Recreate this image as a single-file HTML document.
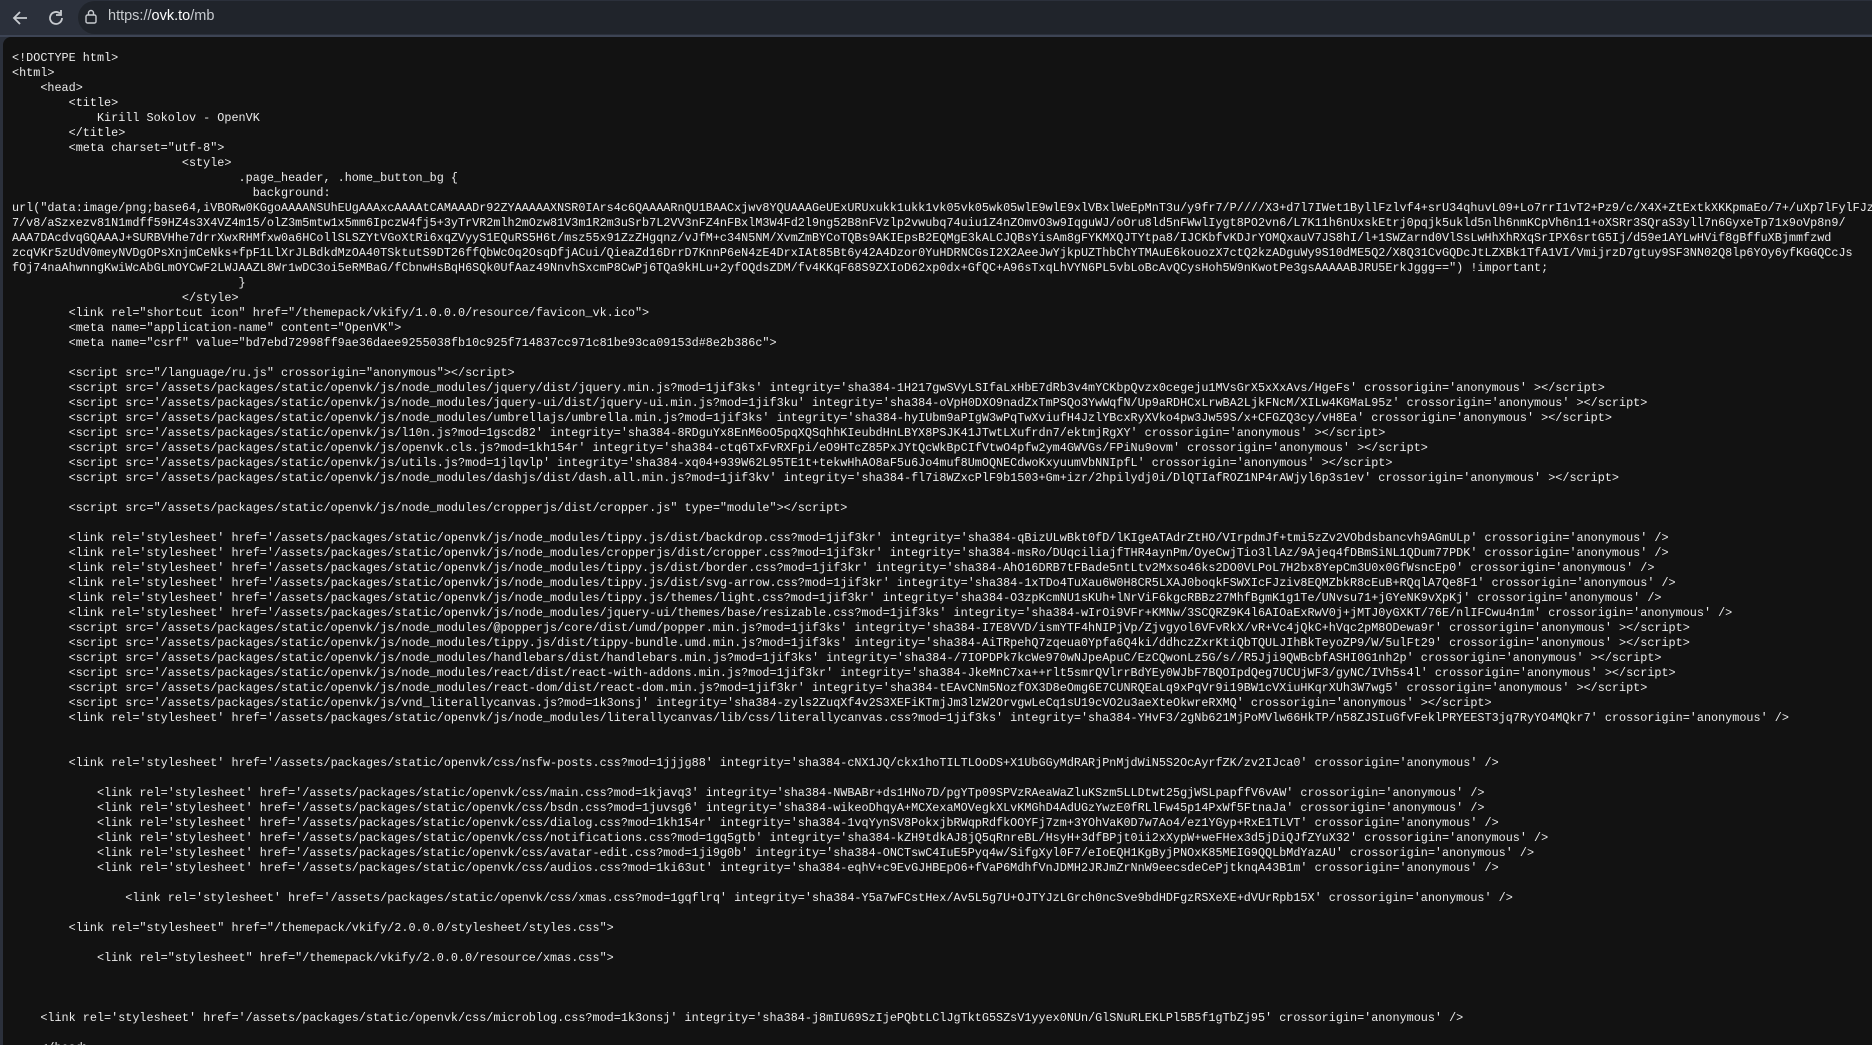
<!DOCTYPE html>
<html><head><meta charset="utf-8"><style>
html,body{margin:0;padding:0;width:1872px;height:1045px;overflow:hidden;background:#2b303b;}
.bar{position:absolute;left:0;top:0;width:1872px;height:37px;background:#2b303b;}
.pill{position:absolute;left:78px;top:1px;right:-20px;height:33px;background:#20242b;border-radius:17px 0 0 17px;}
.url{position:absolute;left:108px;top:8px;font:14.5px "Liberation Sans",sans-serif;color:#c8cbd0;}
.url b{font-weight:normal;color:#fff}
.line{position:absolute;left:0;top:35px;width:1872px;height:2px;background:#3d4454;}
.main{position:absolute;left:3px;top:37px;width:1869px;height:1008px;background:#121212;border-radius:8px 0 0 0;overflow:hidden;}
pre{margin:0;padding:14px 0 0 9px;font:11.8px/15px "Liberation Mono",monospace;color:#ececec;white-space:pre;}
</style></head><body>
<div class="bar">
<svg style="position:absolute;left:10px;top:8px" width="20" height="20" viewBox="0 0 20 20"><path d="M17 10H4M10 4L4 10L10 16" stroke="#c8cbd0" stroke-width="1.8" fill="none"/></svg>
<svg style="position:absolute;left:46px;top:8px" width="20" height="20" viewBox="0 0 20 20"><path d="M16 10a6 6 0 1 1-2-4.5" stroke="#c8cbd0" stroke-width="1.8" fill="none"/><path d="M15 2v5h-5" stroke="#c8cbd0" stroke-width="1.8" fill="none"/></svg>
<div class="pill"></div>
<svg style="position:absolute;left:84px;top:9px" width="14" height="16" viewBox="0 0 14 16"><rect x="2" y="6" width="10" height="8" rx="1.5" stroke="#c8cbd0" stroke-width="1.4" fill="none"/><path d="M4.5 6V4a2.5 2.5 0 0 1 5 0v2" stroke="#c8cbd0" stroke-width="1.4" fill="none"/></svg>
<div class="url">https://<b>ovk.to</b>/mb</div>
<div class="line"></div>
</div>
<div class="main"><pre>&lt;!DOCTYPE html&gt;
&lt;html&gt;
    &lt;head&gt;
        &lt;title&gt;
            Kirill Sokolov - OpenVK
        &lt;/title&gt;
        &lt;meta charset="utf-8"&gt;
                        &lt;style&gt;
                                .page_header, .home_button_bg {
                                  background:
url("data:image/png;base64,iVBORw0KGgoAAAANSUhEUgAAAxcAAAAtCAMAAADr92ZYAAAAAXNSR0IArs4c6QAAAARnQU1BAACxjwv8YQUAAAGeUExURUxukk1ukk1vk05vk05wk05wlE9wlE9xlVBxlWeEpMnT3u/y9fr7/P////X3+d7l7IWet1ByllFzlvf4+srU34qhuvL09+Lo7rrI1vT2+Pz9/c/X4X+ZtExtkXKKpmaEo/7+/uXp7lFylFJzl
7/v8/aSzxezv81N1mdff59HZ4s3X4VZ4m15/olZ3m5mtw1x5mm6IpczW4fj5+3yTrVR2mlh2mOzw81V3m1R2m3uSrb7L2VV3nFZ4nFBxlM3W4Fd2l9ng52B8nFVzlp2vwubq74uiu1Z4nZOmvO3w9IqguWJ/oOru8ld5nFWwlIygt8PO2vn6/L7K11h6nUxskEtrj0pqjk5ukld5nlh6nmKCpVh6n11+oXSRr3SQraS3yll7n6GyxeTp71x9oVp8n9/
AAA7DAcdvqGQAAAJ+SURBVHhe7drrXwxRHMfxw0a6HCollSLSZYtVGoXtRi6xqZVyyS1EQuRS5H6t/msz55x91ZzZHgqnz/vJfM+c34N5NM/XvmZmBYCoTQBs9AKIEpsB2EQMgE3kALCJQBsYisAm8gFYKMXQJTYtpa8/IJCKbfvKDJrYOMQxauV7JS8hI/l+1SWZarnd0VlSsLwHhXhRXqSrIPX6srtG5Ij/d59e1AYLwHVif8gBffuXBjmmfzwd
zcqVKr5zUdV0meyNVDgOPsXnjmCeNks+fpF1LlXrJLBdkdMzOA40TSktutS9DT26ffQbWcOq2OsqDfjACui/QieaZd16DrrD7KnnP6eN4zE4DrxIAt85Bt6y42A4Dzor0YuHDRNCGsI2X2AeeJwYjkpUZThbChYTMAuE6kouozX7ctQ2kzADguWy9S10dME5Q2/X8Q31CvGQDcJtLZXBk1TfA1VI/VmijrzD7gtuy9SF3NN02Q8lp6YOy6yfKGGQCcJs
fOj74naAhwnngKwiWcAbGLmOYCwF2LWJAAZL8Wr1wDC3oi5eRMBaG/fCbnwHsBqH6SQk0UfAaz49NnvhSxcmP8CwPj6TQa9kHLu+2yfOQdsZDM/fv4KKqF68S9ZXIoD62xp0dx+GfQC+A96sTxqLhVYN6PL5vbLoBcAvQCysHoh5W9nKwotPe3gsAAAAABJRU5ErkJggg==") !important;
                                }
                        &lt;/style&gt;
        &lt;link rel="shortcut icon" href="/themepack/vkify/1.0.0.0/resource/favicon_vk.ico"&gt;
        &lt;meta name="application-name" content="OpenVK"&gt;
        &lt;meta name="csrf" value="bd7ebd72998ff9ae36daee9255038fb10c925f714837cc971c81be93ca09153d#8e2b386c"&gt;

        &lt;script src="/language/ru.js" crossorigin="anonymous"&gt;&lt;/script&gt;
        &lt;script src='/assets/packages/static/openvk/js/node_modules/jquery/dist/jquery.min.js?mod=1jif3ks' integrity='sha384-1H217gwSVyLSIfaLxHbE7dRb3v4mYCKbpQvzx0cegeju1MVsGrX5xXxAvs/HgeFs' crossorigin='anonymous' &gt;&lt;/script&gt;
        &lt;script src='/assets/packages/static/openvk/js/node_modules/jquery-ui/dist/jquery-ui.min.js?mod=1jif3ku' integrity='sha384-oVpH0DXO9nadZxTmPSQo3YwWqfN/Up9aRDHCxLrwBA2LjkFNcM/XILw4KGMaL95z' crossorigin='anonymous' &gt;&lt;/script&gt;
        &lt;script src='/assets/packages/static/openvk/js/node_modules/umbrellajs/umbrella.min.js?mod=1jif3ks' integrity='sha384-hyIUbm9aPIgW3wPqTwXviufH4JzlYBcxRyXVko4pw3Jw59S/x+CFGZQ3cy/vH8Ea' crossorigin='anonymous' &gt;&lt;/script&gt;
        &lt;script src='/assets/packages/static/openvk/js/l10n.js?mod=1gscd82' integrity='sha384-8RDguYx8EnM6oO5pqXQSqhhKIeubdHnLBYX8PSJK41JTwtLXufrdn7/ektmjRgXY' crossorigin='anonymous' &gt;&lt;/script&gt;
        &lt;script src='/assets/packages/static/openvk/js/openvk.cls.js?mod=1kh154r' integrity='sha384-ctq6TxFvRXFpi/eO9HTcZ85PxJYtQcWkBpCIfVtwO4pfw2ym4GWVGs/FPiNu9ovm' crossorigin='anonymous' &gt;&lt;/script&gt;
        &lt;script src='/assets/packages/static/openvk/js/utils.js?mod=1jlqvlp' integrity='sha384-xq04+939W62L95TE1t+tekwHhAO8aF5u6Jo4muf8UmOQNECdwoKxyuumVbNNIpfL' crossorigin='anonymous' &gt;&lt;/script&gt;
        &lt;script src='/assets/packages/static/openvk/js/node_modules/dashjs/dist/dash.all.min.js?mod=1jif3kv' integrity='sha384-fl7i8WZxcPlF9b1503+Gm+izr/2hpilydj0i/DlQTIafROZ1NP4rAWjyl6p3s1ev' crossorigin='anonymous' &gt;&lt;/script&gt;

        &lt;script src="/assets/packages/static/openvk/js/node_modules/cropperjs/dist/cropper.js" type="module"&gt;&lt;/script&gt;

        &lt;link rel='stylesheet' href='/assets/packages/static/openvk/js/node_modules/tippy.js/dist/backdrop.css?mod=1jif3kr' integrity='sha384-qBizULwBkt0fD/lKIgeATAdrZtHO/VIrpdmJf+tmi5zZv2VObdsbancvh9AGmULp' crossorigin='anonymous' /&gt;
        &lt;link rel='stylesheet' href='/assets/packages/static/openvk/js/node_modules/cropperjs/dist/cropper.css?mod=1jif3kr' integrity='sha384-msRo/DUqciliajfTHR4aynPm/OyeCwjTio3llAz/9Ajeq4fDBmSiNL1QDum77PDK' crossorigin='anonymous' /&gt;
        &lt;link rel='stylesheet' href='/assets/packages/static/openvk/js/node_modules/tippy.js/dist/border.css?mod=1jif3kr' integrity='sha384-AhO16DRB7tFBade5ntLtv2Mxso46ks2DO0VLPoL7H2bx8YepCm3U0x0GfWsncEp0' crossorigin='anonymous' /&gt;
        &lt;link rel='stylesheet' href='/assets/packages/static/openvk/js/node_modules/tippy.js/dist/svg-arrow.css?mod=1jif3kr' integrity='sha384-1xTDo4TuXau6W0H8CR5LXAJ0boqkFSWXIcFJziv8EQMZbkR8cEuB+RQqlA7Qe8F1' crossorigin='anonymous' /&gt;
        &lt;link rel='stylesheet' href='/assets/packages/static/openvk/js/node_modules/tippy.js/themes/light.css?mod=1jif3kr' integrity='sha384-O3zpKcmNU1sKUh+lNrViF6kgcRBBz27MhfBgmK1g1Te/UNvsu71+jGYeNK9vXpKj' crossorigin='anonymous' /&gt;
        &lt;link rel='stylesheet' href='/assets/packages/static/openvk/js/node_modules/jquery-ui/themes/base/resizable.css?mod=1jif3ks' integrity='sha384-wIrOi9VFr+KMNw/3SCQRZ9K4l6AIOaExRwV0j+jMTJ0yGXKT/76E/nlIFCwu4n1m' crossorigin='anonymous' /&gt;
        &lt;script src='/assets/packages/static/openvk/js/node_modules/@popperjs/core/dist/umd/popper.min.js?mod=1jif3ks' integrity='sha384-I7E8VVD/ismYTF4hNIPjVp/Zjvgyol6VFvRkX/vR+Vc4jQkC+hVqc2pM8ODewa9r' crossorigin='anonymous' &gt;&lt;/script&gt;
        &lt;script src='/assets/packages/static/openvk/js/node_modules/tippy.js/dist/tippy-bundle.umd.min.js?mod=1jif3ks' integrity='sha384-AiTRpehQ7zqeua0Ypfa6Q4ki/ddhczZxrKtiQbTQULJIhBkTeyoZP9/W/5ulFt29' crossorigin='anonymous' &gt;&lt;/script&gt;
        &lt;script src='/assets/packages/static/openvk/js/node_modules/handlebars/dist/handlebars.min.js?mod=1jif3ks' integrity='sha384-/7IOPDPk7kcWe970wNJpeApuC/EzCQwonLz5G/s//R5Jji9QWBcbfASHI0G1nh2p' crossorigin='anonymous' &gt;&lt;/script&gt;
        &lt;script src='/assets/packages/static/openvk/js/node_modules/react/dist/react-with-addons.min.js?mod=1jif3kr' integrity='sha384-JkeMnC7xa++rlt5smrQVlrrBdYEy0WJbF7BQOIpdQeg7UCUjWF3/gyNC/IVh5s4l' crossorigin='anonymous' &gt;&lt;/script&gt;
        &lt;script src='/assets/packages/static/openvk/js/node_modules/react-dom/dist/react-dom.min.js?mod=1jif3kr' integrity='sha384-tEAvCNm5NozfOX3D8eOmg6E7CUNRQEaLq9xPqVr9i19BW1cVXiuHKqrXUh3W7wg5' crossorigin='anonymous' &gt;&lt;/script&gt;
        &lt;script src='/assets/packages/static/openvk/js/vnd_literallycanvas.js?mod=1k3onsj' integrity='sha384-zyls2ZuqXf4v2S3XEFiKTmjJm3lzW2OrvgwLeCq1sU19cVO2u3aeXteOkwreRXMQ' crossorigin='anonymous' &gt;&lt;/script&gt;
        &lt;link rel='stylesheet' href='/assets/packages/static/openvk/js/node_modules/literallycanvas/lib/css/literallycanvas.css?mod=1jif3ks' integrity='sha384-YHvF3/2gNb621MjPoMVlw66HkTP/n58ZJSIuGfvFeklPRYEEST3jq7RyYO4MQkr7' crossorigin='anonymous' /&gt;


        &lt;link rel='stylesheet' href='/assets/packages/static/openvk/css/nsfw-posts.css?mod=1jjjg88' integrity='sha384-cNX1JQ/ckx1hoTILTLOoDS+X1UbGGyMdRARjPnMjdWiN5S2OcAyrfZK/zv2IJca0' crossorigin='anonymous' /&gt;

            &lt;link rel='stylesheet' href='/assets/packages/static/openvk/css/main.css?mod=1kjavq3' integrity='sha384-NWBABr+ds1HNo7D/pgYTp09SPVzRAeaWaZluKSzm5LLDtwt25gjWSLpapffV6vAW' crossorigin='anonymous' /&gt;
            &lt;link rel='stylesheet' href='/assets/packages/static/openvk/css/bsdn.css?mod=1juvsg6' integrity='sha384-wikeoDhqyA+MCXexaMOVegkXLvKMGhD4AdUGzYwzE0fRLlFw45p14PxWf5FtnaJa' crossorigin='anonymous' /&gt;
            &lt;link rel='stylesheet' href='/assets/packages/static/openvk/css/dialog.css?mod=1kh154r' integrity='sha384-1vqYynSV8PokxjbRWqpRdfkOOYFj7zm+3YOhVaK0D7w7Ao4/ez1YGyp+RxE1TLVT' crossorigin='anonymous' /&gt;
            &lt;link rel='stylesheet' href='/assets/packages/static/openvk/css/notifications.css?mod=1gq5gtb' integrity='sha384-kZH9tdkAJ8jQ5qRnreBL/HsyH+3dfBPjt0ii2xXypW+weFHex3d5jDiQJfZYuX32' crossorigin='anonymous' /&gt;
            &lt;link rel='stylesheet' href='/assets/packages/static/openvk/css/avatar-edit.css?mod=1ji9g0b' integrity='sha384-ONCTswC4IuE5Pyq4w/SifgXyl0F7/eIoEQH1KgByjPNOxK85MEIG9QQLbMdYazAU' crossorigin='anonymous' /&gt;
            &lt;link rel='stylesheet' href='/assets/packages/static/openvk/css/audios.css?mod=1ki63ut' integrity='sha384-eqhV+c9EvGJHBEpO6+fVaP6MdhfVnJDMH2JRJmZrNnW9eecsdeCePjtknqA43B1m' crossorigin='anonymous' /&gt;

                &lt;link rel='stylesheet' href='/assets/packages/static/openvk/css/xmas.css?mod=1gqflrq' integrity='sha384-Y5a7wFCstHex/Av5L5g7U+OJTYJzLGrch0ncSve9bdHDFgzRSXeXE+dVUrRpb15X' crossorigin='anonymous' /&gt;

        &lt;link rel="stylesheet" href="/themepack/vkify/2.0.0.0/stylesheet/styles.css"&gt;

            &lt;link rel="stylesheet" href="/themepack/vkify/2.0.0.0/resource/xmas.css"&gt;



    &lt;link rel='stylesheet' href='/assets/packages/static/openvk/css/microblog.css?mod=1k3onsj' integrity='sha384-j8mIU69SzIjePQbtLClJgTktG5SZsV1yyex0NUn/GlSNuRLEKLPl5B5f1gTbZj95' crossorigin='anonymous' /&gt;

    &lt;/head&gt;
</pre></div>
</body></html>
